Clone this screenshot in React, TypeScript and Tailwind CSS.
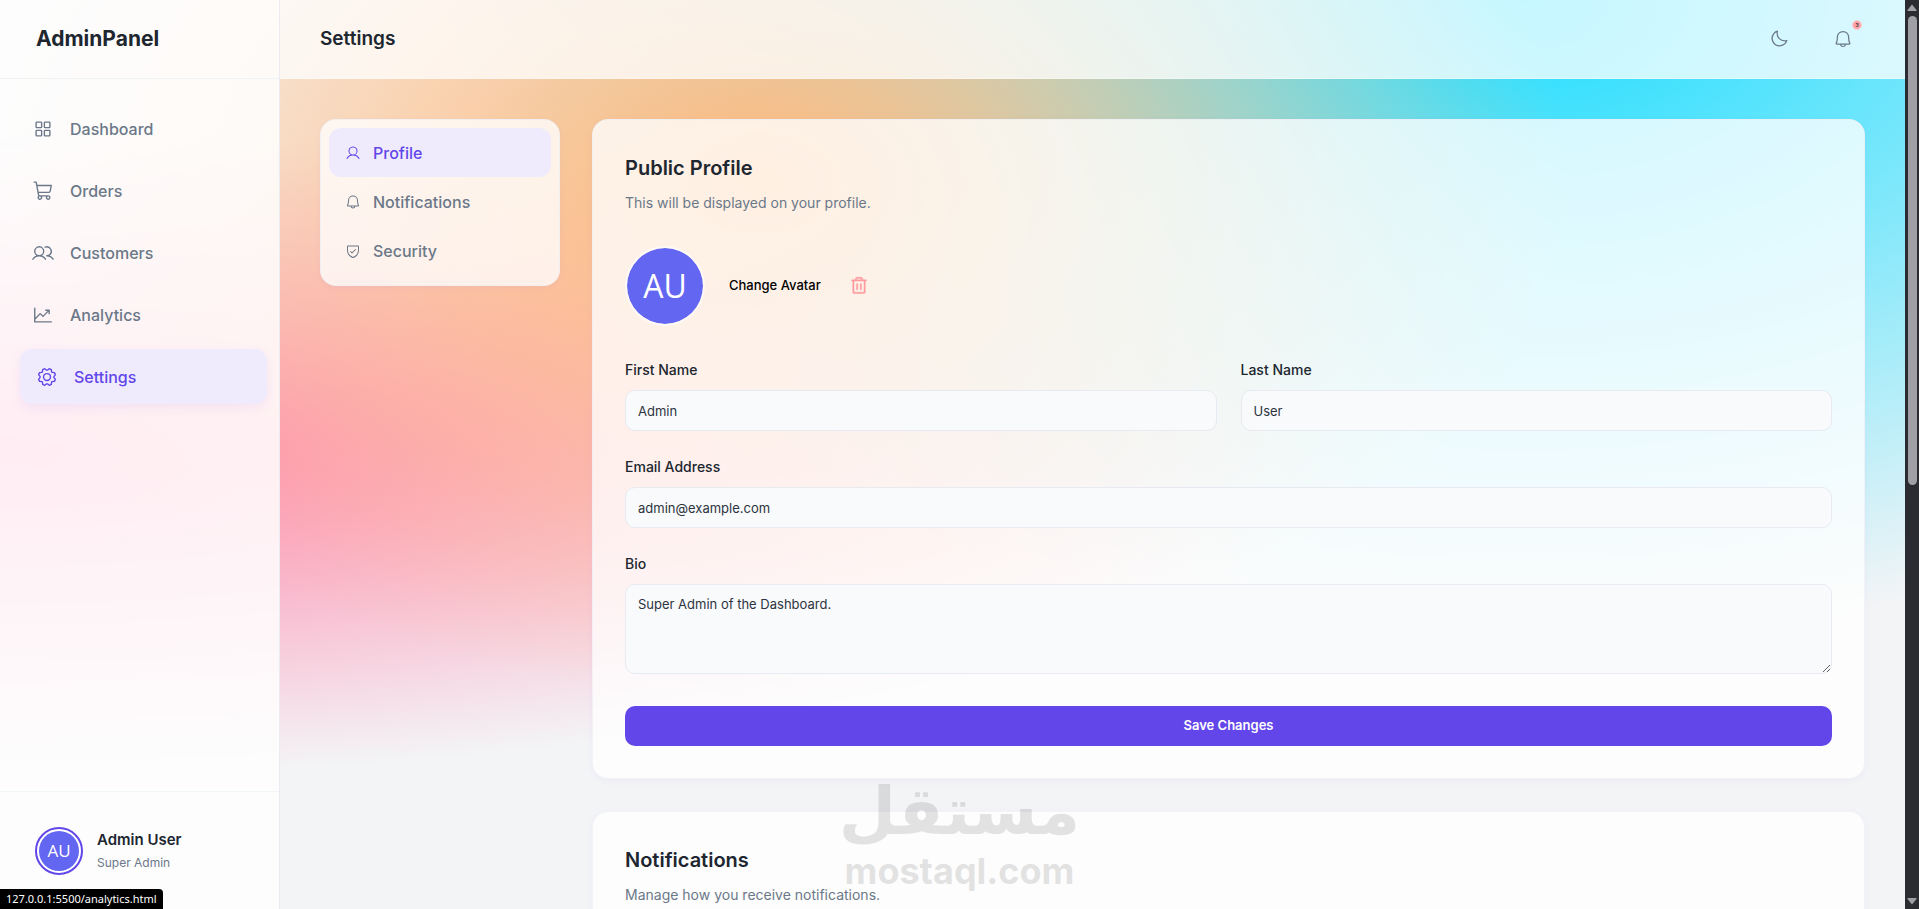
import type { ReactNode } from "react"
import type { IconType } from "react-icons"
import {
  PiBell,
  PiChartLineUp,
  PiGear,
  PiMoon,
  PiShieldCheck,
  PiShoppingCart,
  PiSquaresFour,
  PiTrash,
  PiUser,
  PiUsers,
} from "react-icons/pi"

type NavItem = {
  label: string
  href: string
  icon: IconType
  active?: boolean
}

const mainNav: NavItem[] = [
  { label: "Dashboard", href: "#dashboard", icon: PiSquaresFour },
  { label: "Orders", href: "#orders", icon: PiShoppingCart },
  { label: "Customers", href: "#customers", icon: PiUsers },
  { label: "Analytics", href: "#analytics", icon: PiChartLineUp },
  { label: "Settings", href: "#settings", icon: PiGear, active: true },
]

const settingsNav: NavItem[] = [
  { label: "Profile", href: "#profile", icon: PiUser, active: true },
  { label: "Notifications", href: "#notifications", icon: PiBell },
  { label: "Security", href: "#security", icon: PiShieldCheck },
]

const fieldClass =
  "w-full rounded-[10px] border border-[#e8eaf2] bg-[#f8fafc] px-3 text-[13px] text-[#2d3440] outline-none"

const Sidebar = () => (
  <aside className="flex w-[280px] shrink-0 flex-col border-r border-[#ecebf2] bg-white/85">
    <div className="flex h-[79px] items-center border-b border-[#eef3f5] px-9">
      <span className="text-[21px] font-bold text-[#20262f]">AdminPanel</span>
    </div>
    <nav className="flex flex-1 flex-col gap-[7px] px-4 pt-[22px]">
      {mainNav.map(({ label, href, icon: Icon, active }) => (
        <a
          key={label}
          href={href}
          className={
            active
              ? "flex h-[55px] translate-x-1 items-center gap-4 rounded-xl bg-[#efebfd] px-4 font-medium text-[#6246ea] shadow-[0_4px_12px_rgba(98,70,234,0.08)]"
              : "flex h-[55px] items-center gap-4 rounded-xl px-4 font-medium text-[#6b7888]"
          }
        >
          <Icon size={22} />
          {label}
        </a>
      ))}
    </nav>
    <div className="flex h-[118px] items-center gap-3.5 border-t border-[#f1f6f7] px-[35px]">
      <div className="flex size-12 items-center justify-center rounded-full border-2 border-[#6246ea] bg-white">
        <div className="flex size-10 items-center justify-center rounded-full bg-[#6366f1] font-['Open_Sans',sans-serif] text-[17px] text-white">
          AU
        </div>
      </div>
      <div>
        <p className="text-[15px] leading-6 font-semibold text-[#20262f]">Admin User</p>
        <p className="text-xs leading-[22px] text-[#6b7888]">Super Admin</p>
      </div>
    </div>
  </aside>
)

const Header = () => (
  <header className="flex h-[79px] shrink-0 items-center justify-between border-b border-white/30 bg-white/75 px-10">
    <h1 className="text-[19px] font-semibold text-[#20262f]">Settings</h1>
    <div className="flex gap-5 text-[#6b7888]">
      <button type="button" aria-label="Toggle theme" className="flex size-11 items-center justify-center">
        <PiMoon size={20} />
      </button>
      <button type="button" aria-label="Notifications" className="relative flex size-11 items-center justify-center">
        <PiBell size={20} />
        <span className="absolute top-[3px] right-[3px] flex size-2.5 items-center justify-center rounded-full border border-[#fbd0d4] bg-[#ffa3a8] text-[5px] leading-none font-semibold text-[#20262f]">
          3
        </span>
      </button>
    </div>
  </header>
)

const Card = ({ title, text, children }: { title: string; text: string; children?: ReactNode }) => (
  <section className="rounded-2xl border border-[#ebebf3]/60 bg-white/78 p-8 shadow-[0_2px_6px_rgba(98,70,234,0.05)]">
    <h2 className="text-xl leading-8 font-semibold text-[#20262f]">{title}</h2>
    <p className="mt-2 text-sm leading-[22px] text-[#6b7888]">{text}</p>
    {children}
  </section>
)

const Field = ({ id, label, children }: { id: string; label: string; children: ReactNode }) => (
  <div className="flex flex-col gap-2">
    <label htmlFor={id} className="text-sm leading-6 font-medium text-[#20262f]">
      {label}
    </label>
    {children}
  </div>
)

const ProfileForm = () => (
  <form className="mt-8 flex flex-col gap-8">
    <div className="flex items-center gap-6">
      <div className="flex size-20 items-center justify-center rounded-full border-2 border-white/60 bg-[#6366f1] bg-clip-padding font-['Open_Sans',sans-serif] text-[32px] text-white">
        AU
      </div>
      <div className="flex items-center gap-7">
        <button type="button" className="text-[13px] font-medium text-black">
          Change Avatar
        </button>
        <button type="button" aria-label="Remove avatar" className="text-[#ff9a9e]">
          <PiTrash size={20} className="stroke-current stroke-[6px]" />
        </button>
      </div>
    </div>
    <div className="flex flex-col gap-6">
      <div className="grid grid-cols-2 gap-6">
        <Field id="first-name" label="First Name">
          <input id="first-name" type="text" defaultValue="Admin" className={`${fieldClass} h-[41px]`} />
        </Field>
        <Field id="last-name" label="Last Name">
          <input id="last-name" type="text" defaultValue="User" className={`${fieldClass} h-[41px]`} />
        </Field>
      </div>
      <Field id="email" label="Email Address">
        <input id="email" type="email" defaultValue="admin@example.com" className={`${fieldClass} h-[41px]`} />
      </Field>
      <Field id="bio" label="Bio">
        <textarea
          id="bio"
          defaultValue="Super Admin of the Dashboard."
          className={`${fieldClass} h-[90px] resize-y py-2.5`}
        />
      </Field>
    </div>
    <button type="button" className="h-10 rounded-[10px] bg-[#6246ea] text-[13px] font-semibold text-white">
      Save Changes
    </button>
  </form>
)

const Scrollbar = () => (
  <div className="flex w-3.5 shrink-0 flex-col items-center bg-[#2b2c31] py-1" aria-hidden="true">
    <svg width="10" height="8" viewBox="0 0 10 8" fill="#9f9fa5">
      <path d="M5 0.5 9.5 6v1h-9V6z" />
    </svg>
    <div className="mt-1 h-[52%] w-[9px] rounded-full bg-[#9f9fa5]" />
    <div className="flex-1" />
    <svg width="10" height="8" viewBox="0 0 10 8" fill="#9f9fa5">
      <path d="M5 7.5 9.5 2V1h-9v1z" />
    </svg>
  </div>
)

const Watermark = () => (
  <div className="pointer-events-none absolute bottom-4 left-1/2 flex -translate-x-1/2 flex-col items-center text-black opacity-10">
    <span dir="rtl" lang="ar" className="font-['DejaVu_Sans',sans-serif] text-[66px] leading-[74px] font-bold">
      مستقل
    </span>
    <span className="text-4xl leading-[44px] font-bold">mostaql.com</span>
  </div>
)

export default function App() {
  return (
    <div className="relative flex h-screen overflow-hidden bg-[#f3f4f6] font-['Inter','Liberation_Sans',sans-serif]">
      <div className="flex min-w-0 flex-1 bg-[radial-gradient(at_40%_20%,hsl(28_100%_74%)_0px,transparent_50%),radial-gradient(at_80%_0%,hsl(189_100%_56%)_0px,transparent_50%),radial-gradient(at_0%_50%,hsl(341_100%_76%)_0px,transparent_50%)]">
        <Sidebar />
        <div className="flex min-w-0 flex-1 flex-col">
          <Header />
          <main className="grid min-h-0 flex-1 grid-cols-[240px_minmax(0,1fr)] items-start gap-8 overflow-hidden p-10">
            <nav className="rounded-2xl border border-[#ebebf3]/60 bg-white/78 p-2 pb-2.5 shadow-[0_2px_6px_rgba(98,70,234,0.05)]">
              {settingsNav.map(({ label, href, icon: Icon, active }) => (
                <a
                  key={label}
                  href={href}
                  className={
                    active
                      ? "flex h-[49px] items-center gap-3 rounded-xl bg-[#efebfd] px-4 font-medium text-[#6246ea]"
                      : "flex h-[49px] items-center gap-3 rounded-xl px-4 font-medium text-[#6b7888]"
                  }
                >
                  <Icon size={16} />
                  {label}
                </a>
              ))}
            </nav>
            <div className="flex flex-col gap-8">
              <Card title="Public Profile" text="This will be displayed on your profile.">
                <ProfileForm />
              </Card>
              <Card title="Notifications" text="Manage how you receive notifications." />
            </div>
          </main>
        </div>
      </div>
      <Scrollbar />
      <Watermark />
      {/* browser link preview */}
      <div className="absolute bottom-0 left-0 rounded-tr bg-black px-1.5 font-['Noto_Sans',sans-serif] text-[11px] leading-5 text-white">
        127.0.0.1:5500/analytics.html
      </div>
    </div>
  )
}
